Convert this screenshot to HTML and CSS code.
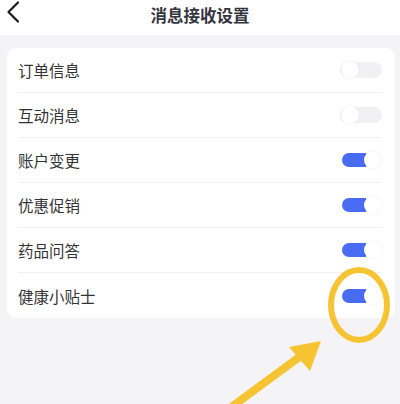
FILE: index.html
```html
<!DOCTYPE html>
<html lang="zh">
<head>
<meta charset="utf-8">
<link rel="stylesheet" href="styles.css">
</head>
<body>
<div class="page">
  <header class="topbar">
    <svg class="back" width="16" height="24" viewBox="0 0 16 24"><path d="M13 2.5 L3.5 12 L13 21.5" fill="none" stroke="#1a1a1a" stroke-width="2.2" stroke-linecap="round" stroke-linejoin="round"/></svg>
    <h1 class="title">消息接收设置</h1>
  </header>
  <main class="content">
    <section class="card">
      <div class="row"><span class="label">订单信息</span><span class="switch off"><span class="knob"></span></span></div>
      <div class="row"><span class="label">互动消息</span><span class="switch off"><span class="knob"></span></span></div>
      <div class="row"><span class="label">账户变更</span><span class="switch on"><span class="knob"></span></span></div>
      <div class="row"><span class="label">优惠促销</span><span class="switch on"><span class="knob"></span></span></div>
      <div class="row"><span class="label">药品问答</span><span class="switch on"><span class="knob"></span></span></div>
      <div class="row last"><span class="label">健康小贴士</span><span class="switch on"><span class="knob"></span></span></div>
    </section>
  </main>
  <svg class="annot" width="400" height="404" viewBox="0 0 400 404">
    <ellipse cx="359" cy="305" rx="28" ry="35" fill="none" stroke="#f6c432" stroke-width="6"/>
    <line x1="222" y1="414" x2="302" y2="355" stroke="#f6c432" stroke-width="8" stroke-linecap="butt"/>
    <polygon points="321,341 289,347 310,371" fill="#f6c432"/>
  </svg>
</div>
</body>
</html>
```
FILE: styles.css
```css
* { box-sizing: border-box; }
html, body { margin: 0; padding: 0; }
body {
  width: 400px;
  height: 404px;
  overflow: hidden;
  background: #f4f4f6;
  font-family: "Noto Sans CJK SC", "Noto Sans", sans-serif;
}
.page { position: relative; width: 400px; height: 404px; }
.topbar {
  height: 35px;
  background: #fff;
  display: flex;
  align-items: center;
  justify-content: center;
  position: relative;
}
.back { position: absolute; left: 5px; top: 0; }
.title {
  margin: 0;
  font-size: 16.5px;
  font-weight: 700;
  color: #34343e;
  letter-spacing: 0;
  line-height: 1;
  margin-top: -5px;
}
.content { padding: 13px 5px 0 7px; }
.card {
  background: #fff;
  border-radius: 9px;
  padding: 0 13px 0 11px;
}
.row {
  height: 45px;
  display: flex;
  align-items: center;
  justify-content: space-between;
  border-bottom: 1px solid #f1f1f3;
}
.row.last { border-bottom: none; }
.label { font-size: 15.5px; color: #333; }
.switch {
  position: relative;
  width: 42px;
  height: 16px;
  border-radius: 8px;
  background: #ededef;
}
.switch .knob {
  position: absolute;
  top: -1px;
  width: 18px;
  height: 18px;
  border-radius: 50%;
  background: #fff;
  box-shadow: 0 0 2px rgba(0,0,0,0.12);
}
.switch.off { opacity: 0.75; }
.switch.off .knob { left: 1px; }
.switch.on { background: linear-gradient(to right, #4a6cf5 60%, #fff 60%); height: 14px; width: 40px; }
.switch.on .knob { left: 22px; top: -2px; box-shadow: 0 0 2px rgba(0,0,0,0.1); }
.annot { position: absolute; left: 0; top: 0; pointer-events: none; }
```
